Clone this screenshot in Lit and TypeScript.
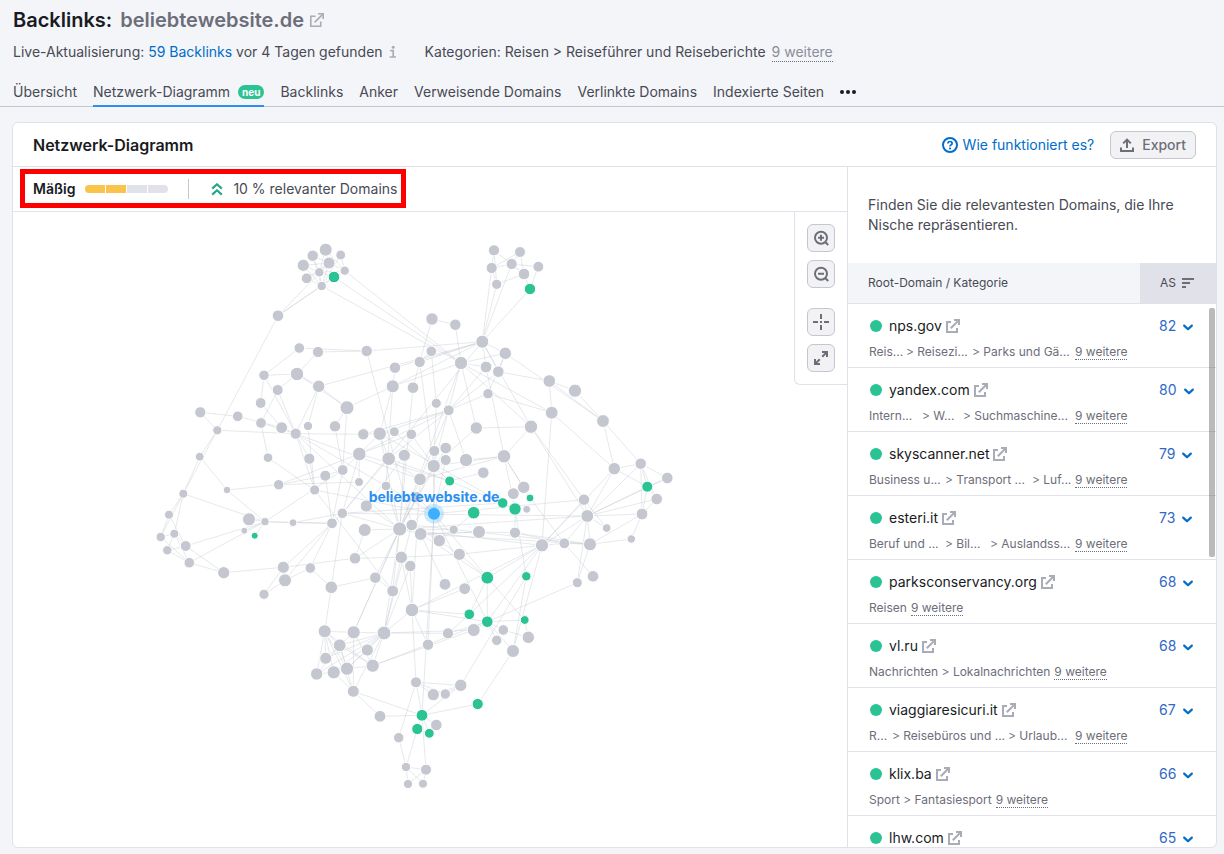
import { LitElement, html, svg, css, nothing } from "lit";
import { customElement, property } from "lit/decorators.js";
import { classMap } from "lit/directives/class-map.js";

/* ---------- data ---------- */

type Kind = "g" | "r"; // grey node, relevant node
type Node = [x: number, y: number, r: number, kind?: Kind];

const NODES: Node[] = [
  [312.7, 255.7, 5.2], [325.7, 249.7, 6], [340.7, 255, 4.4], [303.3, 265.3, 5.6], [329, 263, 5.5],
  [344.7, 270.7, 4.1], [319.3, 272.3, 4.2], [306.7, 278.3, 4.9], [334, 277, 5.3, "r"], [321.7, 286, 4.2],
  [278, 315.7, 5.3], [299.3, 348, 4.8], [318, 352, 5.1], [366.7, 351, 5.2], [264, 375.3, 4.7],
  [297, 374, 6.2], [277.7, 390, 5], [318.7, 386.3, 5.7], [395, 367.7, 5.2], [392.7, 386.3, 6],
  [260.7, 403, 4.9], [347, 407.7, 6.5], [200.3, 412.3, 5.1], [237.7, 416.3, 4.8], [261, 423, 4.9],
  [281.7, 427.7, 5.4], [308, 426, 4.1], [335, 426.3, 5.2], [217.3, 430.3, 4.1], [295.7, 433.7, 5.1],
  [363.3, 434.3, 5.2], [379.7, 433.7, 6.2], [394.3, 431.7, 4.4], [413, 387.7, 5.3], [432, 319, 5.7],
  [455.3, 324.7, 5.2], [494, 250.3, 5.1], [520, 252, 5], [491.7, 268, 5.1], [511.7, 264, 5.1],
  [538.3, 266.7, 4.9], [524, 274, 5.3], [496.7, 284.3, 4.6], [530, 289, 5.2, "r"], [482.3, 341.7, 6],
  [431.3, 351.3, 4.8], [419.7, 362, 5.1], [461, 363, 6.1], [505.3, 353.3, 5.7], [486, 367, 5.4],
  [498.3, 371.7, 5.3], [549.3, 381, 5.8], [575, 390.7, 6.1], [488, 393.7, 4.7], [436.3, 403.3, 4.5],
  [448.7, 410.3, 4.9], [551.7, 412.7, 5.9], [603, 421, 5.9], [476.3, 428, 5.7], [531, 426.7, 6.2],
  [411.3, 434.3, 4.8], [359.3, 454, 6.3], [388.7, 458.7, 6.3], [404.3, 455.3, 5.6], [342.7, 470, 4.9],
  [325.3, 475.7, 5], [359, 482, 4], [386, 486, 4.3], [366.3, 506, 5.6], [342.3, 513.3, 4.7],
  [332, 523.3, 4.9], [364.7, 530, 6], [399.7, 529, 6.6], [411.7, 525, 5.3], [420.7, 534, 5.9],
  [453.7, 529.7, 4.1], [439.3, 540.7, 5.7], [479, 532, 6], [515, 532.7, 5.1], [459.3, 554.3, 5.6],
  [355, 558.3, 5.3], [401.3, 557.3, 5.7], [410.3, 566, 5.2], [542, 545.3, 6.1], [434.3, 451, 5],
  [445.7, 448, 5.3], [445.7, 460, 5], [433.7, 466, 6.1], [420, 479.3, 5.8], [466, 460, 6.1],
  [483.3, 472.7, 5.3], [504, 456.3, 6.2], [449.7, 481, 4.5, "r"], [523.7, 487.3, 5.7], [513.3, 493.7, 5.4],
  [530, 498, 3.5, "r"], [502.7, 503, 4.8, "r"], [515, 509, 5.7, "r"], [526.7, 509.3, 3.5], [473.7, 512.7, 5.8, "r"],
  [434, 513.7, 6], [416.7, 497, 5], [199.7, 456.7, 3.9], [268, 457.7, 4.3], [309.3, 458.7, 5.1],
  [227, 490, 3.3], [278.7, 484.7, 4.7], [314.7, 490, 4.6], [183.3, 493.7, 4], [169, 514.7, 4],
  [249, 519.3, 6], [265, 521.7, 3.6], [293, 522.7, 3.4], [244.3, 530.7, 3], [254.7, 535.7, 3, "r"],
  [160.7, 537, 4.2], [174.3, 533.7, 4], [185.7, 546, 4.9], [167.3, 550.3, 4.2], [189.3, 562.7, 4.8],
  [223.7, 572.7, 5.6], [283.3, 567.3, 5.6], [285, 580.3, 6], [310.3, 568, 4.8], [264, 594.3, 4.6],
  [331.3, 587.3, 5.8], [375.3, 577.7, 5.2], [392.7, 591, 5.4], [324.7, 631.3, 6], [353.7, 632.3, 6.1],
  [384, 633, 6.4], [614.3, 468.7, 5.7], [640.7, 463.7, 5.2], [667.3, 478, 5.3], [647.3, 486.7, 5, "r"],
  [656.7, 499, 5.3], [642, 514, 5.4], [584, 499.7, 5.2], [587.3, 516, 5.9], [606.7, 528, 3.8],
  [631.3, 539, 3.7], [564.3, 543.3, 4.9], [590, 544.3, 6], [577.3, 582.7, 4.5], [593, 576.3, 5.3],
  [487.3, 577.7, 5.9, "r"], [526.3, 576.3, 4.2, "r"], [445, 584.3, 5.4], [464.7, 588.7, 5.4], [412, 610, 6.3],
  [469.3, 614.3, 4.8, "r"], [487.3, 621.7, 5.3, "r"], [524.7, 620, 3.9, "r"], [448, 633.3, 5.1], [473.7, 630, 6],
  [503.3, 630, 4.8], [528.3, 637.3, 5.7], [496.7, 640.3, 4.7], [513, 651, 6], [428, 644.7, 5.2],
  [339.7, 645.3, 5.9], [367.3, 650, 5.6], [325.7, 658.3, 5.5], [316.7, 674, 5.7], [333.7, 672.3, 6.1],
  [347, 668.7, 6.1], [372.7, 665.7, 6.1], [353.3, 691.3, 5.5], [380, 716.3, 5.4], [416, 682.3, 5],
  [433.3, 694.7, 5.6], [445.3, 694, 4.7], [460.7, 685.3, 5.7], [477.7, 704, 5.1, "r"], [422, 715.3, 5.4, "r"],
  [417.3, 729, 5.1, "r"], [436.3, 725, 5.3], [429.3, 733.3, 4.4, "r"], [398.7, 737.7, 4.7], [406, 767, 4.2],
  [426, 769.7, 5], [408, 784, 4.1], [423, 783.7, 4],
];

const ROOT_NODE = 100;

// Each entry links its first node with all the nodes that follow.
const LINKS: number[][] = [
  [0, 6, 4, 9], [1, 6, 5, 4], [2, 5, 9], [3, 6, 4, 9], [4, 6, 5, 10], [5, 6, 47], [7, 6, 9, 4],
  [8, 6, 9, 10, 47], [9, 6, 4, 10, 47], [10, 28], [11, 13, 14], [12, 13, 15], [13, 44, 73], [14, 15, 29, 20],
  [15, 16, 17, 21], [16, 29, 24], [17, 21, 29, 26, 44], [18, 19, 44], [19, 21, 44, 47, 31, 67], [20, 25],
  [21, 27, 64], [22, 23, 28], [23, 25], [24, 29, 103], [25, 29], [26, 107], [27, 64], [28, 29, 102, 108],
  [29, 30, 107, 104, 72, 100, 88], [30, 31], [31, 32, 55, 61, 62, 96, 72], [32, 92], [33, 46, 72],
  [34, 35, 46], [35, 47], [36, 41, 42, 38], [37, 38, 41, 39], [38, 39, 42, 44], [39, 40, 41, 44],
  [40, 43], [41, 43, 42], [42, 44], [43, 44], [44, 46, 48, 50, 49, 59, 69], [45, 46, 54], [46, 87],
  [47, 48, 49, 56, 59, 58, 87, 72], [48, 53, 57], [49, 55, 97], [50, 55, 51, 48], [51, 56, 57, 52],
  [52, 57], [53, 55, 56], [54, 84], [55, 30, 61, 62, 88, 89], [56, 83, 131], [57, 131, 132], [58, 59, 87],
  [59, 91, 138, 137], [60, 61, 87], [61, 64, 69, 92, 66], [62, 69, 88, 92], [63, 68, 72], [64, 65, 70, 111],
  [65, 106, 70], [66, 106], [67, 72], [68, 72], [69, 70, 72, 96, 112, 138, 125], [70, 112, 121, 122, 123, 111],
  [71, 72], [72, 73, 74, 88, 87, 85, 75, 138, 126, 129, 101, 80, 83], [73, 142, 76, 92, 130], [74, 77, 145, 142, 147],
  [76, 79], [77, 78, 74], [78, 141, 142, 97], [79, 83, 81, 145], [80, 71, 81, 121], [81, 130, 149],
  [82, 130, 149], [83, 138, 137, 141, 145, 151, 150, 149, 158, 131], [84, 100], [86, 87, 100], [87, 91, 100],
  [88, 91, 149], [89, 91], [90, 92], [91, 93, 95], [92, 96], [93, 94], [95, 141], [96, 97], [97, 146],
  [99, 75], [100, 101, 137, 145, 151, 174], [102, 105, 108], [103, 107], [104, 107], [105, 106, 111],
  [106, 61], [107, 127, 100], [108, 111, 109, 116, 115], [109, 117, 115], [110, 111], [111, 112, 113, 114, 117, 119],
  [115, 116, 119], [116, 119, 117, 118], [117, 118, 120], [118, 119], [119, 120], [120, 121], [121, 124],
  [122, 123, 124], [123, 125], [125, 126, 128], [126, 127], [127, 72], [128, 129, 160, 162, 163, 166, 165, 164, 167],
  [129, 130, 160, 166, 167, 72], [130, 160, 161, 162, 163, 164, 165, 166, 153, 154, 149, 167, 72],
  [131, 132, 134], [132, 133, 134, 136, 135], [133, 134], [134, 135, 136], [136, 140, 135],
  [137, 138], [138, 139, 131, 132, 134, 136, 133, 135, 142, 141, 143], [139, 137], [141, 142, 144], [142, 136, 140, 143],
  [143, 151], [145, 151, 150, 152], [146, 172, 158], [148, 149], [149, 150, 151, 159, 169],
  [151, 153, 154, 155, 157, 158, 152, 166], [152, 156], [153, 150], [154, 166], [155, 156], [158, 173],
  [159, 100], [160, 162, 163, 166, 165, 167], [161, 165], [163, 164], [164, 165, 167], [165, 166],
  [167, 168, 174], [168, 174], [169, 174, 178, 172, 171, 170], [170, 172], [171, 172], [172, 174],
  [173, 174], [174, 175, 176, 177, 180], [175, 179], [178, 179], [179, 180, 181, 182], [180, 181, 182],
];

interface Segment { text: string; width?: number }
interface Domain { name: string; score: number; path: Segment[]; more?: string }

const seg = (text: string, width?: number): Segment => ({ text, width });

const DOMAINS: Domain[] = [
  { name: "nps.gov", score: 82, more: "9 weitere", path: [seg("Reis...", 37), seg("> Reisezi...", 66), seg("> Parks und Gä...", 103)] },
  { name: "yandex.com", score: 80, more: "9 weitere", path: [seg("Intern...", 53), seg("> W...", 41), seg("> Suchmaschine...", 112)] },
  { name: "skyscanner.net", score: 79, more: "9 weitere", path: [seg("Business u...", 76), seg("> Transport ...", 87), seg("> Luf...", 43)] },
  { name: "esteri.it", score: 73, more: "9 weitere", path: [seg("Beruf und ...", 76), seg("> Bil...", 45), seg("> Auslandss...", 85)] },
  { name: "parksconservancy.org", score: 68, more: "9 weitere", path: [seg("Reisen")] },
  { name: "vl.ru", score: 68, more: "9 weitere", path: [seg("Nachrichten > Lokalnachrichten")] },
  { name: "viaggiaresicuri.it", score: 67, more: "9 weitere", path: [seg("R...", 23), seg("> Reisebüros und ...", 116), seg("> Urlaub...", 67)] },
  { name: "klix.ba", score: 66, more: "9 weitere", path: [seg("Sport > Fantasiesport")] },
  { name: "lhw.com", score: 65, path: [] },
];

const TABS = [
  { label: "Übersicht" },
  { label: "Netzwerk-Diagramm", active: true, badge: "neu" },
  { label: "Backlinks" },
  { label: "Anker" },
  { label: "Verweisende Domains" },
  { label: "Verlinkte Domains" },
  { label: "Indexierte Seiten" },
];

/* ---------- icons ---------- */

const externalIcon = html`<svg width="14" height="14" viewBox="0 0 14 14" fill="none" stroke="#a9abb6" stroke-width="2" aria-hidden="true">
  <path d="M5 3H1v10h10V9" /><path d="M4.8 9.2 12 2" /><path d="M8 1h5v5" />
</svg>`;

const externalThinIcon = html`<svg width="14" height="14" viewBox="0 0 14 14" fill="none" stroke="#a9abb6" stroke-width="1.6" aria-hidden="true">
  <path d="M5.5 3.3H.8v9.9h9.9V8.5" /><path d="M4.6 9.4 12.6 1.4" /><path d="M8 .8h5.2V6" />
</svg>`;

const infoIcon = html`<svg width="8" height="14" viewBox="0 0 8 14" aria-hidden="true">
  <circle cx="4.2" cy="2.2" r="1.5" fill="#a9abb6" /><path d="M1.2 5.7h3v5.8M.6 12h6.4" fill="none" stroke="#a9abb6" stroke-width="1.7" />
</svg>`;

const helpIcon = html`<svg width="16" height="16" viewBox="0 0 16 16" fill="none" stroke="#006dca" aria-hidden="true">
  <circle cx="8" cy="8" r="7" stroke-width="2" /><path d="M5.9 6.6c0-1.3.9-2.1 2.1-2.1s2.1.8 2.1 1.9c0 1.5-2.1 1.5-2.1 3" stroke-width="1.7" />
  <circle cx="8" cy="11.5" r="1.1" fill="#006dca" stroke="none" />
</svg>`;

const exportIcon = html`<svg width="14" height="14" viewBox="0 0 14 14" fill="none" stroke="#6c6e79" stroke-width="2" aria-hidden="true">
  <path d="M1 9.5V13h12V9.5" /><path d="M7 10V2" /><path d="M3.2 5.4 7 1.6l3.8 3.8" />
</svg>`;

const risingIcon = html`<svg width="12" height="14" viewBox="0 0 12 14" fill="none" stroke="#2aa587" stroke-width="2.2" stroke-linejoin="round" aria-hidden="true">
  <path d="M1.2 6.6 6 2.2l4.8 4.4" /><path d="M1.2 12.6 6 8.2l4.8 4.4" />
</svg>`;

const sortIcon = html`<svg width="12" height="10" viewBox="0 0 12 10" fill="none" stroke="#6c6e79" stroke-width="2" aria-hidden="true">
  <path d="M0 1h12M0 5h8M0 9h4" />
</svg>`;

const chevronIcon = html`<svg width="10" height="10" viewBox="0 0 10 10" fill="none" stroke="#006dca" stroke-width="2.2" stroke-linecap="round" stroke-linejoin="round" aria-hidden="true">
  <path d="M1.2 4.6 5 8.2l3.8-3.6" />
</svg>`;

const zoomIcon = (plus: boolean) => html`<svg width="16" height="16" viewBox="0 0 16 16" fill="none" stroke="#6c6e79" stroke-width="2" aria-hidden="true">
  <circle cx="8" cy="7.7" r="6" /><path d="m12.2 12 3 3M5 7.7h6" />${plus ? svg`<path d="M8 4.7v6" />` : nothing}
</svg>`;

const centerIcon = html`<svg width="16" height="16" viewBox="0 0 16 16" fill="none" stroke="#6c6e79" stroke-width="2" aria-hidden="true">
  <path d="M8 0v5M8 11v5M0 8h5M11 8h5M7 8h2" />
</svg>`;

const expandIcon = html`<svg width="14" height="14" viewBox="0 0 14 14" fill="none" stroke="#6c6e79" stroke-width="2" aria-hidden="true">
  <path d="M8 1h5v5M13 1 8.2 5.8M1 8v5h5M1 13l4.8-4.8" />
</svg>`;

/* ---------- network graph ---------- */

@customElement("network-graph")
export class NetworkGraph extends LitElement {
  @property() label = "";

  static styles = css`
    :host { display: block; position: relative; flex: 1; min-height: 0; overflow: hidden; }
    .canvas { display: block; width: 100%; height: 100%; }
    .link { stroke: #c4c7cf; stroke-opacity: 0.42; stroke-width: 1; }
    .node { fill: #c4c7cf; stroke: #fff; stroke-width: 1; }
    .relevant { fill: #2bc394; }
    .halo { fill: #3aaefc; fill-opacity: 0.25; }
    .core { fill: #3eaffd; }
    .name { fill: #2b8ff0; font: 700 14px "Inter", sans-serif; text-anchor: middle; }
    .controls {
      position: absolute; top: 0; right: 0; display: flex; flex-direction: column; gap: 8px;
      padding: 12px; background: #fff; border: 1px solid #e0e1e9; border-width: 0 0 1px 1px; border-radius: 0 0 0 6px;
    }
    .group { display: flex; flex-direction: column; gap: 8px; }
    .group + .group { margin-top: 12px; }
    .control {
      display: grid; place-items: center; width: 28px; height: 28px; padding: 0;
      background: #f2f2f5; border: 1px solid #c4c7cf; border-radius: 6px; cursor: pointer;
    }
  `;

  render() {
    const [cx, cy] = NODES[ROOT_NODE];
    return html`
      <svg class="canvas" viewBox="13 212 834 635" role="img" aria-label="Netzwerk-Diagramm">
        ${LINKS.map(([from, ...targets]) => targets.map((to) => svg`
          <line class="link" x1=${NODES[from][0]} y1=${NODES[from][1]} x2=${NODES[to][0]} y2=${NODES[to][1]} />`))}
        ${NODES.map(([x, y, r, kind], i) => i === ROOT_NODE ? nothing : svg`
          <circle class=${classMap({ node: true, relevant: kind === "r" })} cx=${x} cy=${y} r=${r + 0.5} />`)}
        <circle class="halo" cx=${cx} cy=${cy} r="10" />
        <circle class="core" cx=${cx} cy=${cy} r="6" />
        <text class="name" x=${cx} y=${cy - 12}>${this.label}</text>
      </svg>
      <div class="controls">
        <div class="group">
          <button class="control" aria-label="Vergrößern">${zoomIcon(true)}</button>
          <button class="control" aria-label="Verkleinern">${zoomIcon(false)}</button>
        </div>
        <div class="group">
          <button class="control" aria-label="Zentrieren">${centerIcon}</button>
          <button class="control" aria-label="Vollbild">${expandIcon}</button>
        </div>
      </div>
    `;
  }
}

/* ---------- domain table ---------- */

@customElement("domain-table")
export class DomainTable extends LitElement {
  @property({ attribute: false }) domains: Domain[] = [];

  static styles = css`
    :host { display: block; position: relative; flex: 1; min-height: 0; }
    .scroller { height: 100%; overflow-y: auto; scrollbar-width: none; }
    .thumb { position: absolute; top: 45px; right: 1px; width: 6px; height: 249px; border-radius: 2px; background: rgba(90, 90, 94, 0.42); }
    table { width: 100%; border-collapse: separate; border-spacing: 0; table-layout: fixed; }
    .score-col { width: 76px; }
    th {
      position: sticky; top: 0; height: 40px; padding: 0 20px; text-align: left; font-weight: 400; font-size: 12px; line-height: 16px;
      color: #484a54; background: #f4f5f9; border-bottom: 1px solid #e0e1e9;
    }
    th.sorted { background: #e0e1e9; }
    .sort { display: flex; align-items: center; gap: 6px; padding: 0; border: 0; background: none; font: inherit; color: inherit; cursor: pointer; }
    td { padding: 12px 20px 7px 21px; vertical-align: top; border-bottom: 1px solid #e0e1e9; }
    td.value { padding: 12px 20px 7px 19px; }
    .site { display: flex; align-items: center; gap: 6px; height: 20px; font-size: 14px; line-height: 20px; }
    .dot { width: 12px; height: 12px; margin: 0 1px; border-radius: 50%; background: #2bc394; }
    .site a { display: flex; align-items: center; gap: 4px; color: #191b23; text-decoration: none; }
    .path { display: flex; height: 16px; margin-top: 8px; font-size: 12px; line-height: 16px; color: #6c6e79; white-space: nowrap; }
    .part { flex: none; box-sizing: border-box; }
    .auto { padding-right: 4px; }
    .more { padding: 0; border: 0; border-bottom: 1px dotted #6c6e79; background: none; font: inherit; color: inherit; cursor: pointer; }
    .score {
      display: flex; align-items: center; gap: 7px; height: 20px; padding: 0; border: 0; background: none;
      font: inherit; font-size: 14px; line-height: 20px; color: #2f69c7; cursor: pointer;
    }
  `;

  render() {
    return html`
      <div class="scroller">
        <table>
          <colgroup><col /><col class="score-col" /></colgroup>
          <thead>
            <tr>
              <th scope="col">Root-Domain / Kategorie</th>
              <th scope="col" class="sorted" aria-sort="descending"><button class="sort">AS ${sortIcon}</button></th>
            </tr>
          </thead>
          <tbody>
            ${this.domains.map((d) => html`
              <tr>
                <td>
                  <div class="site"><span class="dot"></span><a href="#">${d.name} ${externalIcon}</a></div>
                  <div class="path">
                    ${d.path.map((p) => p.width
                      ? html`<span class="part" style="width:${p.width}px">${p.text}</span>`
                      : html`<span class="part auto">${p.text}</span>`)}
                    ${d.more ? html`<button class="more">${d.more}</button>` : nothing}
                  </div>
                </td>
                <td class="value"><button class="score">${d.score} ${chevronIcon}</button></td>
              </tr>`)}
          </tbody>
        </table>
      </div>
      <div class="thumb"></div>
    `;
  }
}

/* ---------- page ---------- */

@customElement("app-root")
export class AppRoot extends LitElement {
  static styles = css`
    :host {
      display: flex; flex-direction: column; box-sizing: border-box; height: 100vh; padding-bottom: 6px;
      background: #f4f5f9; color: #484a54; font: 400 14px/20px "Inter", sans-serif;
    }
    a { color: #006dca; text-decoration: none; }
    h1, h2, p { margin: 0; }
    .head { padding: 6px 13px 0; border-bottom: 1px solid #c4c7cf; }
    h1 { display: flex; align-items: center; gap: 8px; font-size: 20px; line-height: 28px; font-weight: 600; color: #191b23; }
    .target { display: flex; align-items: center; gap: 6px; color: #6c6e79; }
    .meta { display: flex; flex-wrap: wrap; gap: 28px; margin-top: 8px; }
    .update, .categories { display: flex; align-items: center; gap: 6px; }
    .more { padding: 0; border: 0; border-bottom: 1px dotted #6c6e79; background: none; font: inherit; line-height: 18px; color: #8a8e9b; cursor: pointer; }
    .tabs { display: flex; gap: 16px; margin-top: 16px; }
    .tab { display: flex; align-items: center; gap: 8px; padding: 4px 0 3px; margin-bottom: -1px; border-bottom: 2px solid transparent; color: #484a54; }
    .tab.active { border-bottom-color: #2b8ff0; }
    .badge { padding: 0 4px; border-radius: 7px; background: #2bc394; color: #fff; font-size: 10px; line-height: 14px; font-weight: 700; }
    .dots { display: flex; align-items: center; gap: 2px; padding: 0; border: 0; background: none; cursor: pointer; }
    .dots span { width: 4px; height: 4px; border-radius: 50%; background: #191b23; }

    .card {
      display: flex; flex-direction: column; flex: 1; min-height: 0; margin: 15px 7px 0 12px;
      background: #fff; border: 1px solid #e0e1e9; border-radius: 6px; overflow: hidden;
    }
    .card-head { display: flex; align-items: center; gap: 16px; padding: 8px 20px 7px; border-bottom: 1px solid #e0e1e9; }
    h2 { flex: 1; font-size: 16px; line-height: 24px; font-weight: 600; color: #191b23; }
    .help { display: flex; align-items: center; gap: 5px; }
    .export {
      display: flex; align-items: center; gap: 8px; height: 28px; padding: 0 9px; border: 1px solid #c4c7cf; border-radius: 6px;
      background: #f2f2f5; font: inherit; font-weight: 500; color: #6c6e79; cursor: pointer;
    }
    .body { display: flex; flex: 1; min-height: 0; }
    .main { display: flex; flex-direction: column; flex: 1; min-width: 0; }
    .toolbar { display: flex; padding: 2px 7px 3px; border-bottom: 1px solid #e0e1e9; }
    .summary { display: flex; align-items: center; height: 29px; padding: 0 4px 0 8px; border: 5px solid #f00; }
    .level { font-weight: 600; color: #191b23; }
    .meter { display: flex; gap: 1px; margin-left: 10px; border-radius: 4px; overflow: hidden; }
    .step { width: 20px; height: 8px; background: #e0e1e9; }
    .step.on { background: #fac34c; }
    .rule { width: 1px; height: 20px; margin: 0 22px 0 20px; background: #c4c7cf; }
    .share { display: flex; align-items: center; gap: 10px; }
    .side { display: flex; flex-direction: column; flex: none; width: 368px; border-left: 1px solid #e0e1e9; }
    .intro { padding: 28px 20px; }
  `;

  render() {
    return html`
      <header class="head">
        <h1>Backlinks: <a class="target" href="#">beliebtewebsite.de ${externalThinIcon}</a></h1>
        <div class="meta">
          <div class="update"><span>Live-Aktualisierung: <a href="#">59 Backlinks</a> vor 4 Tagen gefunden</span>${infoIcon}</div>
          <div class="categories"><span>Kategorien: Reisen &gt; Reiseführer und Reiseberichte</span><button class="more">9 weitere</button></div>
        </div>
        <nav class="tabs">
          ${TABS.map((t) => html`
            <a href="#" class=${classMap({ tab: true, active: !!t.active })}>${t.label}${t.badge ? html`<span class="badge">${t.badge}</span>` : nothing}</a>`)}
          <button class="dots" aria-label="Mehr"><span></span><span></span><span></span></button>
        </nav>
      </header>
      <section class="card">
        <div class="card-head">
          <h2>Netzwerk-Diagramm</h2>
          <a class="help" href="#">${helpIcon}Wie funktioniert es?</a>
          <button class="export">${exportIcon}Export</button>
        </div>
        <div class="body">
          <div class="main">
            <div class="toolbar">
              <div class="summary">
                <span class="level">Mäßig</span>
                <div class="meter" role="meter" aria-label="Mäßig" aria-valuemin="0" aria-valuemax="4" aria-valuenow="2">
                  ${[1, 2, 3, 4].map((n) => html`<span class=${classMap({ step: true, on: n <= 2 })}></span>`)}
                </div>
                <span class="rule"></span>
                <span class="share">${risingIcon}10 % relevanter Domains</span>
              </div>
            </div>
            <network-graph label="beliebtewebsite.de"></network-graph>
          </div>
          <aside class="side">
            <p class="intro">Finden Sie die relevantesten Domains, die Ihre Nische repräsentieren.</p>
            <domain-table .domains=${DOMAINS}></domain-table>
          </aside>
        </div>
      </section>
    `;
  }
}
